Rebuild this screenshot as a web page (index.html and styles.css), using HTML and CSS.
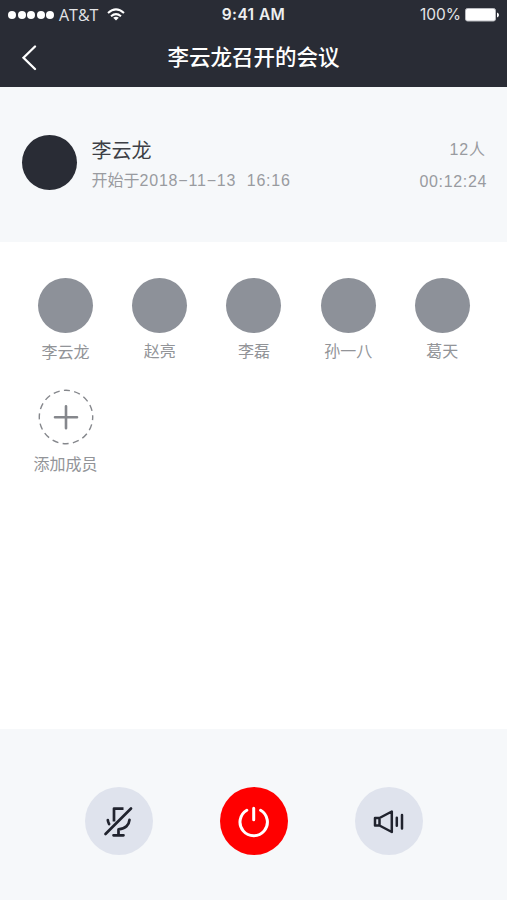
FILE: index.html
```html
<!DOCTYPE html>
<html lang="zh-CN">
<head>
<meta charset="utf-8">
<title>李云龙召开的会议</title>
<link rel="stylesheet" href="styles.css">
</head>
<body>
<header class="top">
  <div class="status">
    <div class="carrier">
      <span class="signal"><i></i><i></i><i></i><i></i><i></i></span>
      <span class="operator">AT&amp;T</span>
      <svg class="wifi" width="18" height="13" viewBox="0 0 18 13" fill="none" stroke="#fff" stroke-width="2"><path d="M1 5Q9-2.200 17 5"/><path d="M4 8.200q5-4.200 10 0"/><path d="M9 12.400L6.200 9.800Q9 7.800 11.800 9.800Z" fill="#fff" stroke="none"/></svg>
    </div>
    <div class="clock">9:41 AM</div>
    <div class="power">
      <span class="percent">100%</span>
      <svg width="34" height="14" viewBox="0 0 34 14"><rect x=".5" y=".5" width="30" height="12.500" rx="2" fill="#fff" stroke="#b9bbc0"/><path d="M32 4.500q2 .8 2 2.500t-2 2.500z" fill="#fff"/></svg>
    </div>
  </div>
  <nav class="nav">
    <svg class="back" width="16" height="26" viewBox="0 0 16 26" fill="none" stroke="#fff" stroke-width="2.300" stroke-linecap="round"><path d="M14 1.500L2.500 12.700L14 24"/></svg>
    <h1>李云龙召开的会议</h1>
  </nav>
</header>
<section class="host">
  <div class="host-avatar"></div>
  <div class="host-info">
    <div class="host-name">李云龙</div>
    <div class="started">开始于<span class="latin">2018−11−13&nbsp; 16:16</span></div>
  </div>
  <div class="totals">
    <div class="people"><span class="latin">12</span>人</div>
    <div class="duration latin">00:12:24</div>
  </div>
</section>
<main class="members">
  <div class="member"><div class="avatar"></div><span class="label lower">李云龙</span></div>
  <div class="member"><div class="avatar"></div><span class="label">赵亮</span></div>
  <div class="member"><div class="avatar"></div><span class="label">李磊</span></div>
  <div class="member"><div class="avatar"></div><span class="label">孙一八</span></div>
  <div class="member"><div class="avatar"></div><span class="label">葛天</span></div>
  <div class="member">
    <svg class="add" width="56" height="56" viewBox="0 0 56 56" fill="none" stroke="#85878c"><circle cx="28" cy="28" r="26.700" stroke-width="1.400" stroke-dasharray="6.200 4.286" stroke-dashoffset="3"/><path d="M17 28.300h22M28 17.300v22" stroke-width="2.600" stroke-linecap="round"/></svg>
    <span class="label lower">添加成员</span>
  </div>
</main>
<footer class="controls">
  <button class="control" aria-label="静音">
    <svg width="34" height="34" viewBox="0 0 34 34" fill="none" stroke="#20232e" stroke-width="2.700" stroke-linecap="round" stroke-linejoin="round"><path d="M12 17.500V4.600h9.500" stroke-linecap="butt"/><path d="M5.800 16q.2 2.200 1.300 4"/><path d="M27.500 15.800c-.3 3-1 4.500-3 6.500s-4.500 2.700-8 3.100v5.800M11.500 31.300h10"/><path d="M3.500 30L29 4.500"/></svg>
  </button>
  <button class="control hangup" aria-label="结束">
    <svg width="34" height="34" viewBox="0 0 34 34" fill="none" stroke="#fff" stroke-width="3" stroke-linecap="round"><path d="M9.800 6.200a13.700 13.700 0 1 0 13.800 0M16.700 4.300v11.500"/></svg>
  </button>
  <button class="control" aria-label="扬声器">
    <svg width="34" height="34" viewBox="0 0 34 34" fill="none" stroke="#20232e" stroke-width="2.500" stroke-linecap="round" stroke-linejoin="round"><path d="M3 14h4.500v7.500H3zM7.500 14L19.800 7.500v20.500L7.500 21.500"/><path d="M24.800 13.800v8M30 11v13.500"/></svg>
  </button>
</footer>
</body>
</html>
```

FILE: styles.css
```css
* { box-sizing: border-box; }
body {
  margin: 0;
  width: 507px;
  height: 900px;
  display: flex;
  flex-direction: column;
  background: #fff;
  font-family: "Liberation Sans", "Noto Sans CJK SC", sans-serif;
  color: #999ba0;
  overflow: hidden;
}
.top { height: 87px; background: #292c35; color: #fff; }
.status {
  height: 30px;
  padding: 0 8px;
  display: grid;
  grid-template-columns: 1fr auto 1fr;
  align-items: center;
  font: 16px/30px Inter, sans-serif;
}
.carrier { display: flex; align-items: center; }
.signal { display: flex; gap: 1.500px; margin-right: 5px; }
.signal i { width: 8px; height: 8px; border-radius: 50%; background: #fff; }
.operator { font: 16px/30px "Open Sans", sans-serif; color: #e4e5e7; }
.carrier, .clock, .power { height: 30px; }
.wifi { margin: -1px 0 0 9px; }
.clock { font-weight: 600; font-size: 15.500px; line-height: 30px; letter-spacing: .4px; color: #eeeff0; }
.power { display: flex; align-items: center; justify-content: flex-end; gap: 4px; }
.percent { font-size: 15.500px; color: #e4e5e7; }
.nav {
  height: 57px;
  padding: 0 21px;
  display: grid;
  grid-template-columns: 1fr auto 1fr;
  align-items: center;
}
.back { margin-top: -2px; }
h1 {
  margin: -6px 0 0;
  font: 500 21.500px/54px "Noto Sans CJK SC", sans-serif;
}
.host {
  height: 155px;
  padding: 48px 21px 0 22px;
  display: flex;
  background: #f6f8fa;
}
.host-avatar { width: 55px; height: 55px; border-radius: 50%; background: #292c35; }
.host-info { margin: 1px 0 0 14.500px; flex: 1; }
.host-name { font-size: 20px; line-height: 30px; color: #3d3f45; }
.started { font-size: 16px; line-height: 30px; white-space: nowrap; }
.latin { letter-spacing: .8px; }
.totals { text-align: right; font-size: 16px; line-height: 32px; margin-top: -1px; }
.people { padding-right: 1px; }
.duration { margin-right: -1px; letter-spacing: .65px; }
.members {
  flex: 1;
  padding: 36px 18px 0 18.500px;
  display: grid;
  grid-template-columns: repeat(5, 94.200px);
  grid-auto-rows: 112px;
  align-content: start;
}
.member { display: flex; flex-direction: column; align-items: center; }
.avatar { width: 55px; height: 55px; border-radius: 50%; background: #8d9199; }
.label { margin-top: 6.500px; font-size: 16px; line-height: 24px; color: #929498; }
.lower { margin-top: 8px; }
.add { margin-top: -1px; }
.controls {
  height: 171px;
  padding: 58px 84px 0 85px;
  display: flex;
  justify-content: space-between;
  background: #f6f8fa;
}
.control {
  width: 68px;
  height: 68px;
  padding: 0;
  border: 0;
  border-radius: 50%;
  background: #dfe3ed;
  display: grid;
  place-items: center;
}
.hangup { background: #f00; }
```
